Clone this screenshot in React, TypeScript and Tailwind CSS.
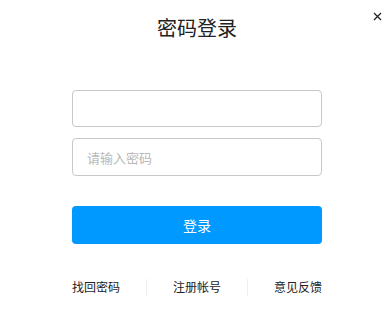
import React from "react";

export default function App() {
  const font = { fontFamily: '"Noto Sans CJK SC", "Microsoft YaHei", sans-serif' };
  return (
    <div className="relative w-[392px] h-[319px] bg-white" style={font}>
      <button className="absolute left-[372px] top-[11px] w-[10px] h-[10px] flex items-center justify-center">
        <svg width="9" height="9" viewBox="0 0 9 9">
          <path d="M1 1L8 8M8 1L1 8" stroke="#222" strokeWidth="1.3" />
        </svg>
      </button>
      <div className="flex flex-col items-center pt-[16px] pl-[2px]">
        <h1 className="text-[20px] leading-[24px] text-[#222] font-normal">密码登录</h1>
        <div className="w-[250px] mt-[50px] flex flex-col">
          <input className="h-[37px] w-full border border-[#c8c8c8] rounded-[4px] px-[14px] text-[13px] outline-none" />
          <input
            type="password"
            placeholder="请输入密码"
            className="h-[38px] w-full mt-[11px] border border-[#c8c8c8] rounded-[4px] px-[14px] text-[13px] outline-none placeholder:text-[#b8b8b8]"
          />
          <button className="mt-[30px] h-[38px] w-full rounded-[4px] bg-[#0099ff] text-white text-[14px]">
            登录
          </button>
          <div className="mt-[34px] flex items-center justify-between text-[12px] text-[#222]">
            <span>找回密码</span>
            <span className="w-px h-[17px] bg-[#eeeeee]" />
            <span>注册帐号</span>
            <span className="w-px h-[17px] bg-[#eeeeee]" />
            <span>意见反馈</span>
          </div>
        </div>
      </div>
    </div>
  );
}
